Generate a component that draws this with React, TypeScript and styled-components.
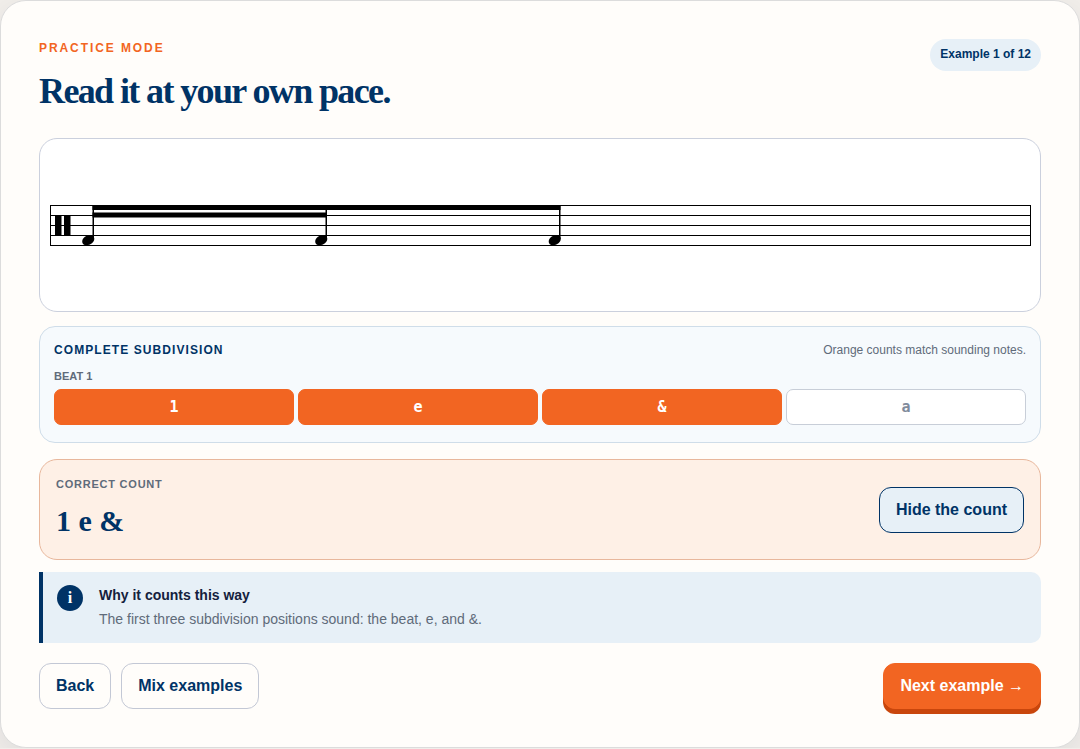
import React from "react";
import styled, { createGlobalStyle } from "styled-components";

const sans = `"Liberation Sans", Arial, sans-serif`;
const serif = `"Liberation Serif", Georgia, serif`;
const navy = "#003366";
const orange = "#f26522";
const muted = "#5f6b7a";
const paleBlue = "#e7f0f7";

const GlobalStyle = createGlobalStyle`
  *, *::before, *::after { box-sizing: border-box; }
  body { margin: 0; background: #f1eeea; font-family: ${sans}; color: #14213d; }
  h1, h2, h3, p { margin: 0; }
`;

const PracticeCard = styled.main`
  padding: 38px;
  border: 1px solid #dcdcdc;
  border-radius: 26px;
  background: #fffdfa;
  box-shadow: 0 10px 30px rgba(0, 30, 60, 0.08);
`;

const Header = styled.header`
  display: flex;
  justify-content: space-between;
  align-items: flex-start;
`;

const Eyebrow = styled.p`
  font-size: 12px;
  line-height: 18px;
  font-weight: 700;
  letter-spacing: 0.16em;
  text-transform: uppercase;
  color: ${orange};
`;

const Title = styled.h1`
  margin-top: 13px;
  font-family: ${serif};
  font-size: 36px;
  line-height: 42px;
  letter-spacing: -0.045em;
  color: ${navy};
`;

const ProgressPill = styled.span`
  padding: 7px 10px 9px;
  border-radius: 16px;
  background: ${paleBlue};
  color: ${navy};
  font-size: 12px;
  line-height: 16px;
  font-weight: 700;
`;

const ScorePanel = styled.section`
  margin-top: 26px;
  border: 1px solid #cbd0dd;
  border-radius: 18px;
  background: #fff;
`;

const Score = styled.svg`
  display: block;
  width: 100%;
`;

const SubdivisionPanel = styled.section`
  margin-top: 14px;
  padding: 14px 14px 17px;
  border: 1px solid #cfdde9;
  border-radius: 16px;
  background: #f6fafd;
`;

const PanelHeader = styled.div`
  display: flex;
  justify-content: space-between;
  align-items: center;
`;

const PanelTitle = styled.h2`
  font-size: 12px;
  line-height: 18px;
  letter-spacing: 0.09em;
  text-transform: uppercase;
  color: ${navy};
`;

const PanelHint = styled.p`
  font-size: 12px;
  line-height: 18px;
  color: ${muted};
`;

const BeatLabel = styled.h3`
  margin: 9px 0 5px;
  font-size: 11px;
  line-height: 16px;
  text-transform: uppercase;
  color: ${muted};
`;

const CountGrid = styled.div`
  display: grid;
  grid-template-columns: repeat(4, 1fr);
  gap: 4px;
`;

const CountCell = styled.span<{ $sounding: boolean }>`
  height: 36px;
  display: grid;
  place-items: center;
  border: 1px solid ${(p) => (p.$sounding ? orange : "#c8ced8")};
  border-radius: 7px;
  background: ${(p) => (p.$sounding ? orange : "#fff")};
  color: ${(p) => (p.$sounding ? "#fff" : "#808b9c")};
  font-family: "DejaVu Sans Mono", monospace;
  font-size: 15px;
  font-weight: 700;
`;

const AnswerPanel = styled.section`
  display: flex;
  justify-content: space-between;
  align-items: center;
  margin-top: 16px;
  padding: 16px;
  border: 1px solid #e8b79c;
  border-radius: 18px;
  background: #fef0e6;
`;

const AnswerLabel = styled.h2`
  font-size: 11px;
  line-height: 16px;
  letter-spacing: 0.07em;
  text-transform: uppercase;
  color: ${muted};
`;

const AnswerText = styled.p`
  margin-top: 11px;
  padding-bottom: 4px;
  font-family: ${serif};
  font-size: 30px;
  line-height: 36px;
  font-weight: 700;
  color: ${navy};
`;

const Explanation = styled.aside`
  display: flex;
  gap: 16px;
  margin-top: 12px;
  padding: 11px 14px 12px;
  border-left: 4px solid ${navy};
  border-radius: 0 10px 10px 0;
  background: ${paleBlue};
`;

const InfoMark = styled.span`
  width: 26px;
  height: 26px;
  margin-top: 2px;
  display: grid;
  place-items: center;
  border-radius: 50%;
  background: ${navy};
  color: #fff;
  font-family: ${serif};
  font-size: 16px;
  line-height: 26px;
  font-weight: 700;
`;

const ExplanationTitle = styled.h2`
  font-size: 14px;
  line-height: 24px;
`;

const ExplanationText = styled.p`
  font-size: 14px;
  line-height: 24px;
  color: ${muted};
`;

const Actions = styled.footer`
  display: flex;
  gap: 10px;
  margin-top: 20px;
`;

const Button = styled.button<{ $tone?: "soft" | "primary" }>`
  height: 46px;
  padding: 0 16px;
  border: 1px solid
    ${(p) => (p.$tone === "primary" ? orange : p.$tone === "soft" ? navy : "#c3c8d5")};
  border-radius: 12px;
  background: ${(p) =>
    p.$tone === "primary" ? orange : p.$tone === "soft" ? paleBlue : "#fffdfa"};
  box-shadow: ${(p) => (p.$tone === "primary" ? "0 5px 0 #c9460c" : "none")};
  color: ${(p) => (p.$tone === "primary" ? "#fff" : navy)};
  font-family: ${sans};
  font-size: 16px;
  font-weight: 700;
  cursor: pointer;
`;

const NextButton = styled(Button)`
  margin-left: auto;
`;

const counts = [
  { label: "1", sounding: true },
  { label: "e", sounding: true },
  { label: "&", sounding: true },
  { label: "a", sounding: false },
];

const staffLines = [66, 76, 86, 96, 106];
const noteStems = [53, 286, 519.5];

function Notation() {
  return (
    <Score viewBox="0 0 1000 172" role="img" aria-label="Two sixteenth notes and an eighth note">
      {staffLines.map((y) => (
        <rect key={y} x="10" y={y} width="981" height="1" />
      ))}
      <rect x="10" y="66" width="1" height="41" />
      <rect x="990" y="66" width="1" height="41" />
      <rect x="15" y="76.5" width="6.5" height="20" />
      <rect x="24" y="76.5" width="6.5" height="20" />
      <rect x="52.5" y="66" width="468" height="5" />
      <rect x="52.5" y="73.5" width="234.5" height="5" />
      {noteStems.map((x) => (
        <g key={x}>
          <rect x={x - 0.5} y="66" width="1.5" height="34" />
          <path
            transform={`translate(${x - 11} 101.2)`}
            d="M8-5.3C10.7-5.3 12.3-3.8 12.3-1.5C12.3 2 8.6 5 4.4 5C1.7 5 .2 3.5 .2 1.3C.2-2.2 4-5.3 8-5.3Z"
          />
        </g>
      ))}
    </Score>
  );
}

export default function App() {
  return (
    <>
      <GlobalStyle />
      <PracticeCard>
        <Header>
          <div>
            <Eyebrow>Practice mode</Eyebrow>
            <Title>Read it at your own pace.</Title>
          </div>
          <ProgressPill>Example 1 of 12</ProgressPill>
        </Header>

        <ScorePanel>
          <Notation />
        </ScorePanel>

        <SubdivisionPanel>
          <PanelHeader>
            <PanelTitle>Complete subdivision</PanelTitle>
            <PanelHint>Orange counts match sounding notes.</PanelHint>
          </PanelHeader>
          <BeatLabel>Beat 1</BeatLabel>
          <CountGrid>
            {counts.map((c) => (
              <CountCell key={c.label} $sounding={c.sounding}>
                {c.label}
              </CountCell>
            ))}
          </CountGrid>
        </SubdivisionPanel>

        <AnswerPanel>
          <div>
            <AnswerLabel>Correct count</AnswerLabel>
            <AnswerText>1 e &amp;</AnswerText>
          </div>
          <Button type="button" $tone="soft">Hide the count</Button>
        </AnswerPanel>

        <Explanation>
          <InfoMark aria-hidden="true">i</InfoMark>
          <div>
            <ExplanationTitle>Why it counts this way</ExplanationTitle>
            <ExplanationText>
              The first three subdivision positions sound: the beat, e, and &amp;.
            </ExplanationText>
          </div>
        </Explanation>

        <Actions>
          <Button type="button">Back</Button>
          <Button type="button">Mix examples</Button>
          <NextButton type="button" $tone="primary">Next example →</NextButton>
        </Actions>
      </PracticeCard>
    </>
  );
}
